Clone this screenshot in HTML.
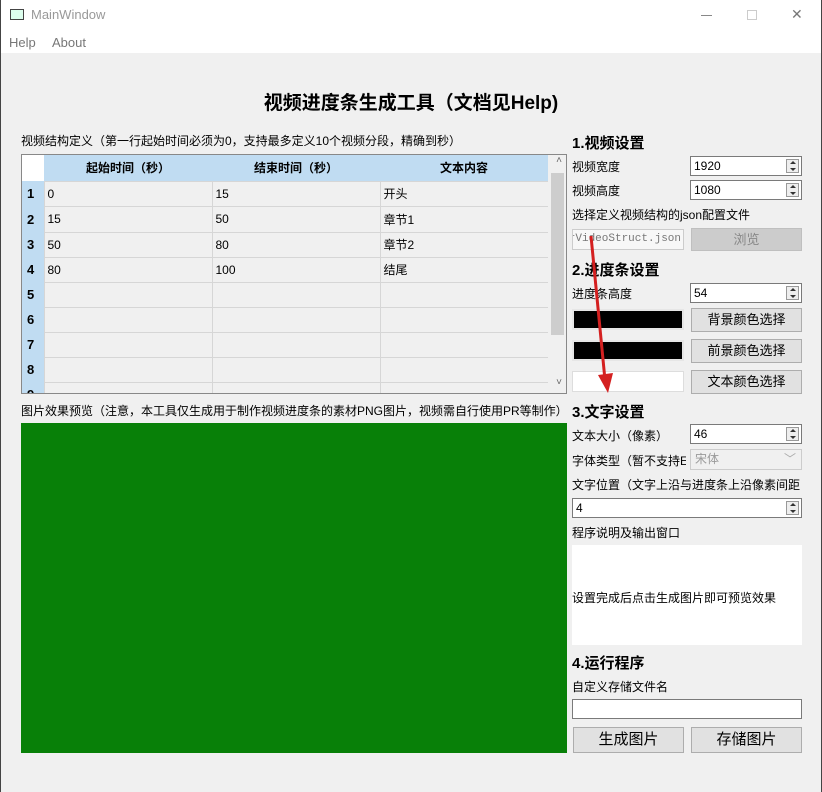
<!DOCTYPE html>
<html><head><meta charset="utf-8"><style>
*{box-sizing:border-box;margin:0;padding:0}
html,body{width:822px;height:792px;overflow:hidden}
body{background:#f0f0f0;font-family:"Liberation Sans","Microsoft YaHei","Noto Sans CJK SC",sans-serif;font-size:12px;color:#000;position:relative}
.abs{position:absolute}
#tb{left:0;top:0;width:822px;height:30px;background:#fff}
#menu{left:0;top:30px;width:822px;height:23px;background:#fff}
.bl{left:0;top:0;width:1px;height:792px;background:#444}
.br{right:0;top:0;width:1px;height:792px;background:#444}
table{border-collapse:collapse}
.lab{font-size:12px;white-space:nowrap}
.h{font-weight:bold;font-size:15px}
.spin{background:#fff;border:1px solid #7a7a7a;height:20px;padding-left:3px;line-height:18px;font-size:12px}
.spin i{position:absolute;right:2px;top:2px;width:13px;height:14px;border:1px solid #999;background:#eee}
.spin i:before{content:"";position:absolute;left:3px;top:1px;border:3px solid transparent;border-bottom:3px solid #333;border-top:0}
.spin i:after{content:"";position:absolute;left:3px;top:8px;border:3px solid transparent;border-top:3px solid #333;border-bottom:0}
.btn{background:#e1e1e1;border:1px solid #adadad;text-align:center;font-size:13px}
</style></head><body>
<div class="abs" id="tb"></div>
<div class="abs" style="left:10px;top:9px;width:14px;height:11px;border:1px solid #444;background:#dfe"></div>
<div class="abs" style="left:31px;top:7px;font-size:13px;color:#999">MainWindow</div>
<div class="abs" style="left:701px;top:15px;width:11px;height:1px;background:#888"></div>
<div class="abs" style="left:747px;top:10px;width:10px;height:10px;border:1px solid #ccc"></div>
<div class="abs" style="left:791px;top:6px;font-size:14px;color:#777">✕</div>
<div class="abs" id="menu"></div>
<div class="abs" style="left:9px;top:35px;font-size:13px;color:#777">Help</div>
<div class="abs" style="left:52px;top:35px;font-size:13px;color:#777">About</div>
<div class="abs bl"></div><div class="abs br"></div>

<div class="abs" style="left:0;width:822px;top:88px;text-align:center;font-weight:bold;font-size:19px">视频进度条生成工具（文档见Help)</div>
<div class="abs lab" style="left:21px;top:132px">视频结构定义（第一行起始时间必须为0，支持最多定义10个视频分段，精确到秒）</div>

<div class="abs" style="left:21px;top:154px;width:546px;height:240px;border:1px solid #888;background:#f0f0f0;overflow:hidden">
<table style="font-size:12px">
<tr style="height:26px;background:#c0dcf2;font-weight:bold"><td style="width:22px;background:#fff"></td><td style="width:168px;text-align:center">起始时间（秒）</td><td style="width:168px;text-align:center">结束时间（秒）</td><td style="width:168px;text-align:center">文本内容</td></tr>
<tbody>
<tr style="height:25px"><td style="background:#c0dcf2;font-weight:bold;padding-left:5px;font-size:13px">1</td><td style="border:1px solid #d6d6d6;padding-left:3px">0</td><td style="border:1px solid #d6d6d6;padding-left:3px">15</td><td style="border:1px solid #d6d6d6;padding-left:3px">开头</td></tr>
<tr style="height:26px"><td style="background:#c0dcf2;font-weight:bold;padding-left:5px;font-size:13px">2</td><td style="border:1px solid #d6d6d6;padding-left:3px">15</td><td style="border:1px solid #d6d6d6;padding-left:3px">50</td><td style="border:1px solid #d6d6d6;padding-left:3px">章节1</td></tr>
<tr style="height:25px"><td style="background:#c0dcf2;font-weight:bold;padding-left:5px;font-size:13px">3</td><td style="border:1px solid #d6d6d6;padding-left:3px">50</td><td style="border:1px solid #d6d6d6;padding-left:3px">80</td><td style="border:1px solid #d6d6d6;padding-left:3px">章节2</td></tr>
<tr style="height:25px"><td style="background:#c0dcf2;font-weight:bold;padding-left:5px;font-size:13px">4</td><td style="border:1px solid #d6d6d6;padding-left:3px">80</td><td style="border:1px solid #d6d6d6;padding-left:3px">100</td><td style="border:1px solid #d6d6d6;padding-left:3px">结尾</td></tr>
<tr style="height:25px"><td style="background:#c0dcf2;font-weight:bold;padding-left:5px;font-size:13px">5</td><td style="border:1px solid #d6d6d6"></td><td style="border:1px solid #d6d6d6"></td><td style="border:1px solid #d6d6d6"></td></tr>
<tr style="height:25px"><td style="background:#c0dcf2;font-weight:bold;padding-left:5px;font-size:13px">6</td><td style="border:1px solid #d6d6d6"></td><td style="border:1px solid #d6d6d6"></td><td style="border:1px solid #d6d6d6"></td></tr>
<tr style="height:25px"><td style="background:#c0dcf2;font-weight:bold;padding-left:5px;font-size:13px">7</td><td style="border:1px solid #d6d6d6"></td><td style="border:1px solid #d6d6d6"></td><td style="border:1px solid #d6d6d6"></td></tr>
<tr style="height:25px"><td style="background:#c0dcf2;font-weight:bold;padding-left:5px;font-size:13px">8</td><td style="border:1px solid #d6d6d6"></td><td style="border:1px solid #d6d6d6"></td><td style="border:1px solid #d6d6d6"></td></tr>
<tr style="height:25px"><td style="background:#c0dcf2;font-weight:bold;padding-left:5px;font-size:13px">9</td><td style="border:1px solid #d6d6d6"></td><td style="border:1px solid #d6d6d6"></td><td style="border:1px solid #d6d6d6"></td></tr>
</tbody></table>
<div class="abs" style="right:0;top:0;width:18px;height:238px;background:#f0f0f0"></div>
<div class="abs" style="right:2px;top:18px;width:13px;height:162px;background:#cdcdcd"></div>
<div class="abs" style="right:4px;top:0;font-size:10px;color:#666">˄</div>
<div class="abs" style="right:4px;top:222px;font-size:10px;color:#666">˅</div>
</div>

<div class="abs lab" style="left:21px;top:402px">图片效果预览（注意，本工具仅生成用于制作视频进度条的素材PNG图片，视频需自行使用PR等制作）</div>
<div class="abs" style="left:21px;top:423px;width:546px;height:330px;background:#088008"></div>

<div class="abs h" style="left:572px;top:132px">1.视频设置</div>
<div class="abs lab" style="left:572px;top:158px">视频宽度</div>
<div class="abs spin" style="left:690px;top:156px;width:112px">1920<i></i></div>
<div class="abs lab" style="left:572px;top:182px">视频高度</div>
<div class="abs spin" style="left:690px;top:180px;width:112px">1080<i></i></div>
<div class="abs lab" style="left:572px;top:206px">选择定义视频结构的json配置文件</div>
<div class="abs" style="left:572px;top:229px;width:112px;height:21px;border:1px solid #ccc;background:#f7f7f7;color:#777;font-family:'Liberation Mono',monospace;font-size:11px;line-height:19px;overflow:hidden;white-space:nowrap;direction:rtl;padding-right:2px">erVideoStruct.json</div>
<div class="abs btn" style="left:691px;top:228px;width:111px;height:23px;line-height:21px;background:#ccc;border-color:#bfbfbf;color:#888">浏览</div>
<div class="abs h" style="left:572px;top:259px">2.进度条设置</div>
<div class="abs lab" style="left:572px;top:285px">进度条高度</div>
<div class="abs spin" style="left:690px;top:283px;width:112px">54<i></i></div>
<div class="abs" style="left:572px;top:309px;width:112px;height:21px;background:#000;border:2px solid #e6e6e6"></div>
<div class="abs btn" style="left:691px;top:308px;width:111px;height:24px;line-height:22px">背景颜色选择</div>
<div class="abs" style="left:572px;top:340px;width:112px;height:21px;background:#000;border:2px solid #e6e6e6"></div>
<div class="abs btn" style="left:691px;top:339px;width:111px;height:24px;line-height:22px">前景颜色选择</div>
<div class="abs" style="left:572px;top:371px;width:112px;height:21px;background:#fff;border:1px solid #ddd"></div>
<div class="abs btn" style="left:691px;top:370px;width:111px;height:24px;line-height:22px">文本颜色选择</div>
<div class="abs h" style="left:572px;top:401px">3.文字设置</div>
<div class="abs lab" style="left:572px;top:427px">文本大小（像素）</div>
<div class="abs spin" style="left:690px;top:424px;width:112px">46<i></i></div>
<div class="abs lab" style="left:572px;top:452px;width:114px;overflow:hidden">字体类型（暂不支持E</div>
<div class="abs" style="left:690px;top:449px;width:112px;height:21px;border:1px solid #ccc;background:#f0f0f0;color:#999;padding-left:4px;line-height:19px">宋体<span style="position:absolute;right:5px;color:#aaa">﹀</span></div>
<div class="abs lab" style="left:572px;top:476px">文字位置（文字上沿与进度条上沿像素间距</div>
<div class="abs spin" style="left:572px;top:498px;width:230px">4<i></i></div>
<div class="abs lab" style="left:572px;top:524px">程序说明及输出窗口</div>
<div class="abs" style="left:572px;top:545px;width:230px;height:100px;background:#fff"></div>
<div class="abs lab" style="left:572px;top:589px">设置完成后点击生成图片即可预览效果</div>
<div class="abs h" style="left:572px;top:652px">4.运行程序</div>
<div class="abs lab" style="left:572px;top:678px">自定义存储文件名</div>
<div class="abs" style="left:572px;top:699px;width:230px;height:20px;background:#fff;border:1px solid #7a7a7a"></div>
<div class="abs btn" style="left:573px;top:727px;width:111px;height:26px;line-height:24px;font-size:15px">生成图片</div>
<div class="abs btn" style="left:691px;top:727px;width:111px;height:26px;line-height:24px;font-size:15px">存储图片</div>

<svg class="abs" style="left:0;top:0" width="822" height="792">
<path d="M591 236 L605 380" stroke="#d42020" stroke-width="3" fill="none"/>
<path d="M598 375 L608 393 L613 373 Z" fill="#d42020"/>
</svg>
</body></html>
